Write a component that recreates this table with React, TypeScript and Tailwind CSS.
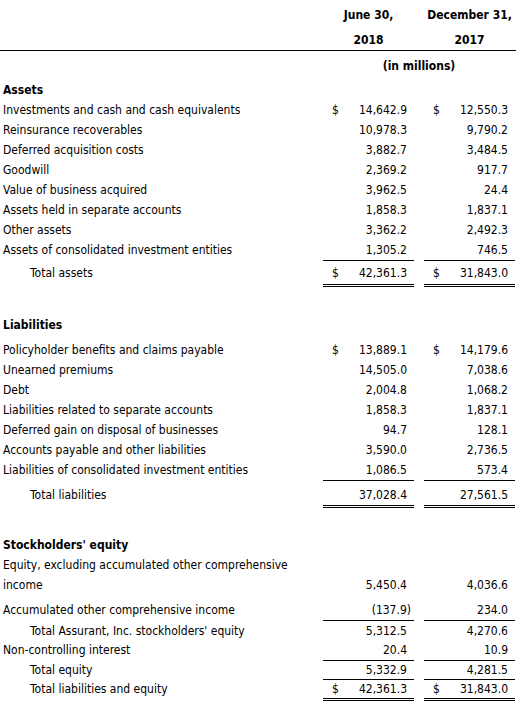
import React from "react";

type Line = "single" | "double" | undefined;

type Row = {
  label?: React.ReactNode;
  indent?: boolean;
  bold?: boolean;
  v1?: string;
  v2?: string;
  d?: boolean;
  h: string;
  line?: Line;
  end?: boolean;
  neg1?: boolean;
};

const cols = "grid grid-cols-[313px_91px_91px] gap-x-[10px]";

function valBorder(line: Line) {
  if (line === "single") return "border-b border-black";
  if (line === "double") return "border-b-[3px] border-double border-black";
  return "";
}
function labelBorder(line: Line) {
  if (line === "single") return "border-b border-transparent";
  if (line === "double") return "border-b-[3px] border-transparent";
  return "";
}

function Val({ v, d, neg, line, h, end }: { v?: string; d?: boolean; neg?: boolean; line: Line; h: string; end?: boolean }) {
  return (
    <div className={`${h} ${valBorder(line)} flex ${end ? "items-end" : "items-center"} justify-between pl-[9px] pr-[7px]`}>
      <span>{d ? "$" : ""}</span>
      <span className={neg ? "-mr-[4px]" : ""}>{v ?? ""}</span>
    </div>
  );
}

function TableRow({ r }: { r: Row }) {
  return (
    <div className={cols}>
      <div
        className={`${r.h} ${labelBorder(r.line)} flex ${r.end ? "items-end" : "items-center"} ${r.indent ? "pl-[30px]" : "pl-[3px]"} ${r.bold ? "font-bold" : ""}`}
      >
        <span>{r.label}</span>
      </div>
      <Val v={r.v1} d={r.d} neg={r.neg1} line={r.line} h={r.h} end={r.end} />
      <Val v={r.v2} d={r.d} line={r.line} h={r.h} end={r.end} />
    </div>
  );
}

const assets: Row[] = [
  { label: "Assets", bold: true, h: "h-[20px]" },
  { label: "Investments and cash and cash equivalents", v1: "14,642.9", v2: "12,550.3", d: true, h: "h-[20px]" },
  { label: "Reinsurance recoverables", v1: "10,978.3", v2: "9,790.2", h: "h-[20px]" },
  { label: "Deferred acquisition costs", v1: "3,882.7", v2: "3,484.5", h: "h-[20px]" },
  { label: "Goodwill", v1: "2,369.2", v2: "917.7", h: "h-[20px]" },
  { label: "Value of business acquired", v1: "3,962.5", v2: "24.4", h: "h-[20px]" },
  { label: "Assets held in separate accounts", v1: "1,858.3", v2: "1,837.1", h: "h-[20px]" },
  { label: "Other assets", v1: "3,362.2", v2: "2,492.3", h: "h-[20px]" },
  { label: "Assets of consolidated investment entities", v1: "1,305.2", v2: "746.5", h: "h-[21px]", line: "single" },
  { label: "Total assets", indent: true, v1: "42,361.3", v2: "31,843.0", d: true, h: "h-[26px] pt-[1px]", line: "double" },
];

const liabilities: Row[] = [
  { label: "Policyholder benefits and claims payable", v1: "13,889.1", v2: "14,179.6", d: true, h: "h-[20px]" },
  { label: "Unearned premiums", v1: "14,505.0", v2: "7,038.6", h: "h-[20px]" },
  { label: "Debt", v1: "2,004.8", v2: "1,068.2", h: "h-[20px]" },
  { label: "Liabilities related to separate accounts", v1: "1,858.3", v2: "1,837.1", h: "h-[20px]" },
  { label: "Deferred gain on disposal of businesses", v1: "94.7", v2: "128.1", h: "h-[20px]" },
  { label: "Accounts payable and other liabilities", v1: "3,590.0", v2: "2,736.5", h: "h-[20px]" },
  { label: "Liabilities of consolidated investment entities", v1: "1,086.5", v2: "573.4", h: "h-[21px]", line: "single" },
  { label: "Total liabilities", indent: true, v1: "37,028.4", v2: "27,561.5", h: "h-[27px] pt-[3px]", line: "double" },
];

const equity: Row[] = [
  { label: "Stockholders' equity", bold: true, h: "h-[20px]" },
  {
    label: (
      <>
        Equity, excluding accumulated other comprehensive
        <br />
        income
      </>
    ),
    v1: "5,450.4",
    v2: "4,036.6",
    h: "h-[40px]",
    end: true,
  },
];

const equity2: Row[] = [
  { label: "Accumulated other comprehensive income", v1: "(137.9)", v2: "234.0", neg1: true, h: "h-[21px]", line: "single" },
  { label: "Total Assurant, Inc. stockholders' equity", indent: true, v1: "5,312.5", v2: "4,270.6", h: "h-[19px]" },
  { label: "Non-controlling interest", v1: "20.4", v2: "10.9", h: "h-[21px]", line: "single" },
  { label: "Total equity", indent: true, v1: "5,332.9", v2: "4,281.5", h: "h-[19px]", line: "single" },
  { label: "Total liabilities and equity", indent: true, v1: "42,361.3", v2: "31,843.0", d: true, h: "h-[21px]", line: "double" },
];

export default function App() {
  return (
    <div className="w-[516px] h-[703px] overflow-hidden bg-white text-black text-[12px] leading-[20px] font-['DejaVu_Sans_Condensed','DejaVu_Sans',sans-serif]">
      <div className={cols}>
        <div className="h-[30px]" />
        <div className="h-[30px] flex items-center justify-center font-bold">June 30,</div>
        <div className="h-[30px] flex items-center justify-center font-bold">December 31,</div>
      </div>
      <div className={cols}>
        <div className="h-[20px]" />
        <div className="h-[20px] flex items-center justify-center font-bold">2018</div>
        <div className="h-[20px] flex items-center justify-center font-bold">2017</div>
      </div>
      <div className="h-px w-[516px] bg-black" />
      <div className={cols}>
        <div className="h-[29px]" />
        <div className="col-span-2 h-[29px] flex items-center justify-center font-bold">(in millions)</div>
      </div>
      {assets.map((r, i) => (
        <TableRow key={`a${i}`} r={r} />
      ))}
      <div className="h-[28px]" />
      <TableRow r={{ label: "Liabilities", bold: true, h: "h-[20px]" }} />
      <div className="h-[5px]" />
      {liabilities.map((r, i) => (
        <TableRow key={`l${i}`} r={r} />
      ))}
      <div className="h-[27px]" />
      {equity.map((r, i) => (
        <TableRow key={`e${i}`} r={r} />
      ))}
      <div className="h-[5px]" />
      {equity2.map((r, i) => (
        <TableRow key={`f${i}`} r={r} />
      ))}
    </div>
  );
}
